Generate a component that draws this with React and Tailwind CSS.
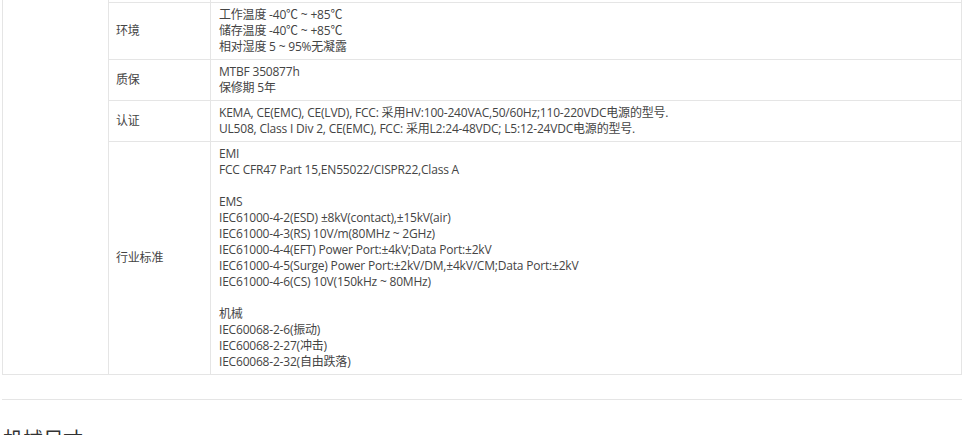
import React from 'react';

const rows = [
  {
    label: '环境',
    lines: ['工作温度 -40℃ ~ +85℃', '储存温度 -40℃ ~ +85℃', '相对湿度 5 ~ 95%无凝露'],
  },
  {
    label: '质保',
    lines: ['MTBF 350877h', '保修期 5年'],
  },
  {
    label: '认证',
    lines: [
      'KEMA, CE(EMC), CE(LVD), FCC: 采用HV:100-240VAC,50/60Hz;110-220VDC电源的型号.',
      'UL508, Class I Div 2, CE(EMC), FCC: 采用L2:24-48VDC; L5:12-24VDC电源的型号.',
    ],
  },
  {
    label: '行业标准',
    lines: [
      'EMI',
      'FCC CFR47 Part 15,EN55022/CISPR22,Class A',
      '',
      'EMS',
      'IEC61000-4-2(ESD) ±8kV(contact),±15kV(air)',
      'IEC61000-4-3(RS) 10V/m(80MHz ~ 2GHz)',
      'IEC61000-4-4(EFT) Power Port:±4kV;Data Port:±2kV',
      'IEC61000-4-5(Surge) Power Port:±2kV/DM,±4kV/CM;Data Port:±2kV',
      'IEC61000-4-6(CS) 10V(150kHz ~ 80MHz)',
      '',
      '机械',
      'IEC60068-2-6(振动)',
      'IEC60068-2-27(冲击)',
      'IEC60068-2-32(自由跌落)',
    ],
  },
];

const font = { fontFamily: '"Open Sans", "Noto Sans CJK SC", sans-serif' };

export default function App() {
  return (
    <div className="bg-white w-[966px] h-[435px] overflow-hidden text-[12px] leading-4 text-[#444]" style={font}>
      {/* spec table (scrolled, top rows hidden) */}
      <div className="ml-[2px] w-[960px] flex border-l border-r border-b border-[#e5e5e5] tracking-[-0.2px]">
        <div className="w-[106px] shrink-0 border-r border-[#e5e5e5]"></div>
        <div className="flex-1 flex flex-col">
          <div className="flex h-[2px]">
            <div className="w-[102px] shrink-0 border-r border-[#e5e5e5]"></div>
            <div className="flex-1"></div>
          </div>
          {rows.map((row) => (
            <div key={row.label} className="flex border-t border-[#e5e5e5]">
              <div className="w-[102px] shrink-0 border-r border-[#e5e5e5] flex items-center px-[7px]">
                {row.label}
              </div>
              <div className="flex-1 px-[8px] py-[4px]">
                {row.lines.map((line, i) => (
                  <div key={i} className="h-4 whitespace-nowrap">
                    {line}
                  </div>
                ))}
              </div>
            </div>
          ))}
        </div>
      </div>

      <div className="ml-[2px] w-[960px] mt-[24px] border-t border-[#e5e5e5]"></div>

      <h2 className="ml-[3px] mt-[25px] text-[20px] leading-[30px] text-[#333] font-normal">机械尺寸</h2>
    </div>
  );
}
